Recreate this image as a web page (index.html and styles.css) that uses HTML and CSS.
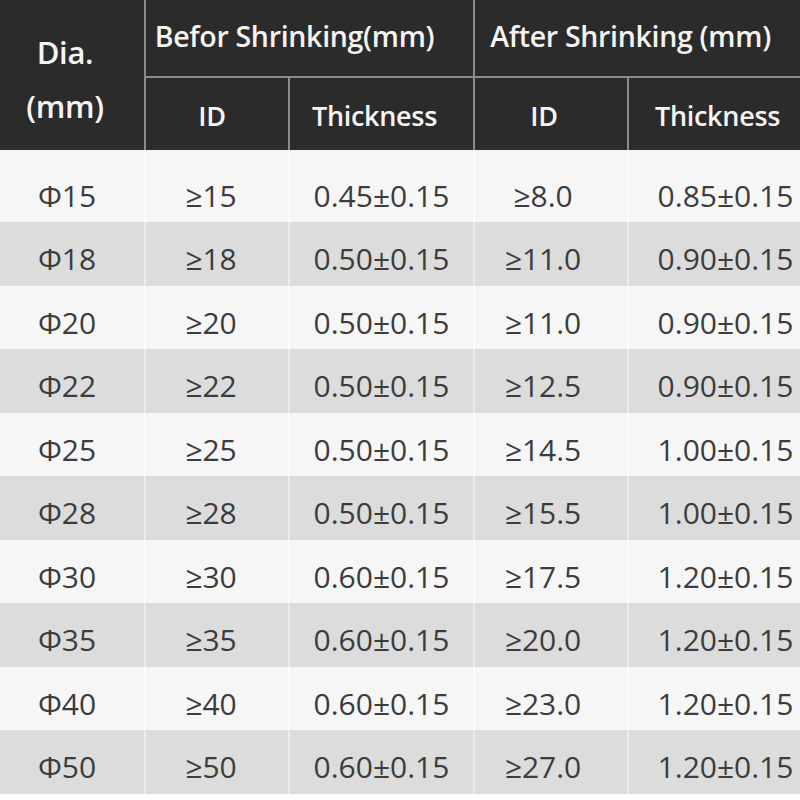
FILE: index.html
```html
<!DOCTYPE html>
<html>
<head>
<meta charset="utf-8">
<link rel="stylesheet" href="styles.css">
</head>
<body>
<table class="spec">
  <colgroup>
    <col class="c-dia"><col class="c-id1"><col class="c-th1"><col class="c-id2"><col class="c-th2">
  </colgroup>
  <thead>
    <tr class="h1">
      <th rowspan="2" class="dia"><span>Dia.</span><span>(mm)</span></th>
      <th colspan="2" class="grp">Befor Shrinking(mm)</th>
      <th colspan="2" class="grp">After Shrinking (mm)</th>
    </tr>
    <tr class="h2">
      <th>ID</th><th>Thickness</th><th>ID</th><th>Thickness</th>
    </tr>
  </thead>
  <tbody>
    <tr class="first"><td>Φ15</td><td>≥15</td><td>0.45±0.15</td><td>≥8.0</td><td>0.85±0.15</td></tr>
    <tr class="alt"><td>Φ18</td><td>≥18</td><td>0.50±0.15</td><td>≥11.0</td><td>0.90±0.15</td></tr>
    <tr><td>Φ20</td><td>≥20</td><td>0.50±0.15</td><td>≥11.0</td><td>0.90±0.15</td></tr>
    <tr class="alt"><td>Φ22</td><td>≥22</td><td>0.50±0.15</td><td>≥12.5</td><td>0.90±0.15</td></tr>
    <tr><td>Φ25</td><td>≥25</td><td>0.50±0.15</td><td>≥14.5</td><td>1.00±0.15</td></tr>
    <tr class="alt"><td>Φ28</td><td>≥28</td><td>0.50±0.15</td><td>≥15.5</td><td>1.00±0.15</td></tr>
    <tr><td>Φ30</td><td>≥30</td><td>0.60±0.15</td><td>≥17.5</td><td>1.20±0.15</td></tr>
    <tr class="alt"><td>Φ35</td><td>≥35</td><td>0.60±0.15</td><td>≥20.0</td><td>1.20±0.15</td></tr>
    <tr><td>Φ40</td><td>≥40</td><td>0.60±0.15</td><td>≥23.0</td><td>1.20±0.15</td></tr>
    <tr class="alt"><td>Φ50</td><td>≥50</td><td>0.60±0.15</td><td>≥27.0</td><td>1.20±0.15</td></tr>
  </tbody>
</table>
</body>
</html>
```

FILE: styles.css
```css
html, body {
  margin: 0;
  padding: 0;
  background: #ffffff;
}

.spec {
  width: 800px;
  border-collapse: collapse;
  table-layout: fixed;
  font-family: "Open Sans", "Noto Sans", sans-serif;
}

.c-dia { width: 145px; }
.c-id1 { width: 144px; }
.c-th1 { width: 185px; }
.c-id2 { width: 154px; }
.c-th2 { width: 172px; }

.spec thead th {
  background: #2b2b2b;
  color: #f4f4f4;
  font-weight: 600;
  padding: 0;
  text-align: center;
  vertical-align: middle;
  white-space: nowrap;
  letter-spacing: -0.3px;
}

.spec thead th + th,
.spec .h2 th {
  border-left: 2px solid #8c8c8c;
}

.spec .h1 { height: 77px; }
.spec .h2 { height: 73px; }

.spec .grp {
  font-size: 28.5px;
  border-bottom: 2px solid #8c8c8c;
  padding-bottom: 4px;
}

.spec .h1 .grp:nth-child(2) { padding-right: 30px; }
.spec .h1 .grp:nth-child(3) { padding-right: 14px; }

.spec .h2 th {
  font-size: 27px;
  padding-top: 2px;
}

.spec .h2 th:nth-child(1) { padding-right: 10px; }
.spec .h2 th:nth-child(2) { padding-right: 14px; }
.spec .h2 th:nth-child(3) { padding-right: 14px; }
.spec .h2 th:nth-child(4) { padding-left: 6px; }

.spec .dia {
  font-size: 31px;
  padding: 8px 14px 0 0;
}

.spec .dia span {
  display: block;
  line-height: 54px;
}

.spec tbody td {
  box-sizing: border-box;
  height: 63.5px;
  padding: 10px 0 0;
  text-align: center;
  vertical-align: middle;
  font-size: 30px;
  color: #3c3c3c;
  background: #f6f6f6;
  white-space: nowrap;
  letter-spacing: 0;
}

.spec tbody td:nth-child(1) { padding-right: 10px; }
.spec tbody td:nth-child(2) { padding-right: 12px; }
.spec tbody td:nth-child(4) { padding-right: 16px; }
.spec tbody td:nth-child(5) { padding-left: 22px; }

.spec tbody td + td {
  border-left: 2px solid #fcfcfc;
}

.spec tbody tr.first td {
  height: 72px;
  padding-top: 18px;
}

.spec tbody tr.alt td {
  background: #dcdcdc;
}

.spec tbody tr.alt td + td {
  border-left-color: #ececec;
}
```
